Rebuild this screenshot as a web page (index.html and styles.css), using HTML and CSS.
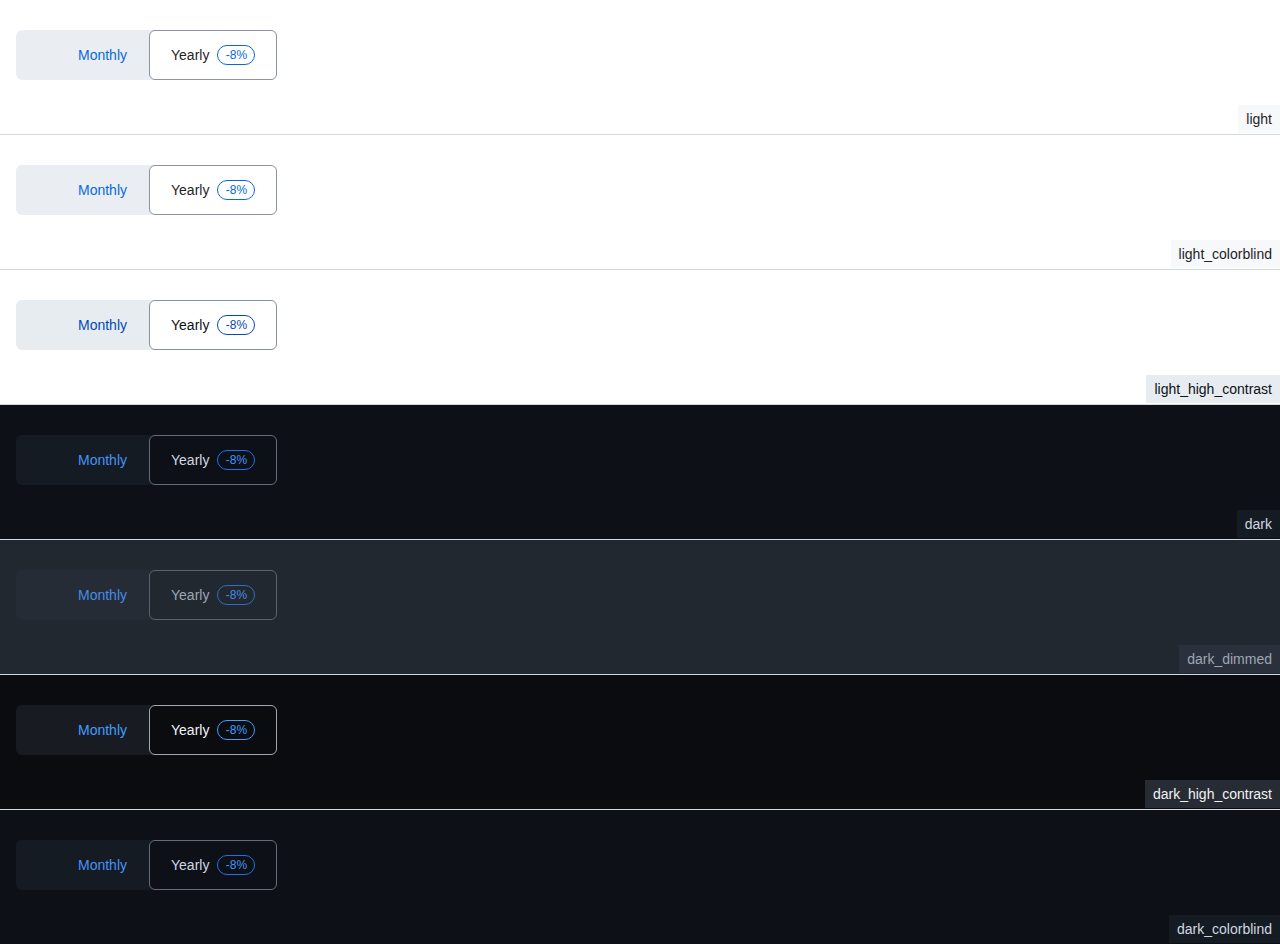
FILE: index.html
```html
<!DOCTYPE html>
<html lang="en">
<head>
<meta charset="utf-8">
<title>SegmentedControl themes</title>
<link rel="stylesheet" href="styles.css">
</head>
<body>
<main class="stack">
  <section class="panel theme-light">
    <div class="seg"><span class="seg-item">Monthly</span><span class="seg-item selected">Yearly <span class="badge">-8%</span></span></div>
    <div class="label">light</div>
  </section>
  <section class="panel theme-light">
    <div class="seg"><span class="seg-item">Monthly</span><span class="seg-item selected">Yearly <span class="badge">-8%</span></span></div>
    <div class="label">light_colorblind</div>
  </section>
  <section class="panel theme-lhc">
    <div class="seg"><span class="seg-item">Monthly</span><span class="seg-item selected">Yearly <span class="badge">-8%</span></span></div>
    <div class="label">light_high_contrast</div>
  </section>
  <section class="panel theme-dark">
    <div class="seg"><span class="seg-item">Monthly</span><span class="seg-item selected">Yearly <span class="badge">-8%</span></span></div>
    <div class="label">dark</div>
  </section>
  <section class="panel theme-dimmed">
    <div class="seg"><span class="seg-item">Monthly</span><span class="seg-item selected">Yearly <span class="badge">-8%</span></span></div>
    <div class="label">dark_dimmed</div>
  </section>
  <section class="panel theme-dhc">
    <div class="seg"><span class="seg-item">Monthly</span><span class="seg-item selected">Yearly <span class="badge">-8%</span></span></div>
    <div class="label">dark_high_contrast</div>
  </section>
  <section class="panel theme-dark">
    <div class="seg"><span class="seg-item">Monthly</span><span class="seg-item selected">Yearly <span class="badge">-8%</span></span></div>
    <div class="label">dark_colorblind</div>
  </section>
</main>
</body>
</html>
```

FILE: styles.css
```css
html, body {
  margin: 0;
  padding: 0;
  background: #fff;
}
body {
  font-family: "Liberation Sans", Arial, sans-serif;
  font-size: 14px;
  line-height: 20px;
}
.stack {
  display: flex;
  flex-direction: column;
}
.panel {
  box-sizing: border-box;
  height: 135px;
  flex: none;
  display: flex;
  flex-direction: column;
  align-items: flex-start;
  padding: 30px 0 0 16px;
  border-bottom: 1px solid #d0d7de;
  background: var(--page);
}
.seg {
  display: flex;
  height: 50px;
  border-radius: 6px;
  background: var(--segbg);
}
.seg-item {
  box-sizing: border-box;
  display: flex;
  align-items: center;
  height: 50px;
  border-radius: 6px;
}
.seg-item:first-child {
  width: 133px;
  justify-content: flex-end;
  padding-right: 22px;
  color: var(--accent);
}
.seg-item.selected {
  width: 128px;
  padding: 0 20px 0 21px;
  gap: 8px;
  background: var(--page);
  border: 1px solid var(--selborder);
  color: var(--fg);
}
.badge {
  box-sizing: border-box;
  display: inline-flex;
  align-items: center;
  justify-content: center;
  height: 20px;
  width: 38px;
  padding: 0 6px;
  border: 1px solid var(--badgeborder);
  border-radius: 10px;
  font-size: 12px;
  line-height: 18px;
  color: var(--accent);
}
.label {
  margin-top: auto;
  margin-bottom: 1px;
  align-self: flex-end;
  padding: 4px 8px;
  background: var(--labelbg);
  color: var(--labelfg);
}

.theme-light {
  --page: #ffffff;
  --segbg: #eaeef2;
  --accent: #0969da;
  --selborder: #8c959f;
  --fg: #1f2328;
  --badgeborder: #0969da;
  --labelbg: #f6f8fa;
  --labelfg: #1f2328;
}
.theme-lhc {
  --page: #ffffff;
  --segbg: #e7ecf0;
  --accent: #0349b4;
  --selborder: #88929d;
  --fg: #0e1116;
  --badgeborder: #0349b4;
  --labelbg: #e7ecf0;
  --labelfg: #0e1116;
}
.theme-dark {
  --page: #0d1117;
  --segbg: #151b23;
  --accent: #4493f8;
  --selborder: #656c76;
  --fg: #d1d7e0;
  --badgeborder: #1f6feb;
  --labelbg: #151b23;
  --labelfg: #d1d7e0;
}
.theme-dimmed {
  --page: #212830;
  --segbg: #262c36;
  --accent: #478be6;
  --selborder: #5a636e;
  --fg: #9ea7b3;
  --badgeborder: #316dca;
  --labelbg: #2a313c;
  --labelfg: #9ea7b3;
}
.theme-dhc {
  --page: #0a0c10;
  --segbg: #181c22;
  --accent: #409eff;
  --selborder: #9ea7b3;
  --fg: #f0f3f6;
  --badgeborder: #409eff;
  --labelbg: #272b33;
  --labelfg: #f0f3f6;
}
```
